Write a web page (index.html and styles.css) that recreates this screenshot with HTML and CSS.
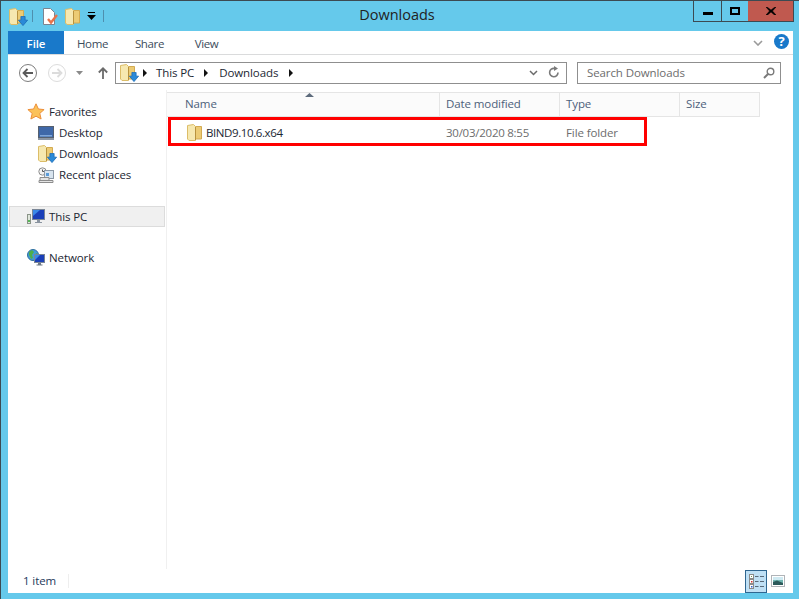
FILE: index.html
```html
<!DOCTYPE html>
<html lang="en">
<head>
    <meta charset="UTF-8">
    <meta name="viewport" content="width=device-width, initial-scale=1.0">
    <title>Downloads</title>
    <link rel="stylesheet" href="styles.css">
</head>
<body>
    <svg class="defs" width="0" height="0">
        <symbol id="folder" viewBox="0 0 15 17">
            <path d="M7 2.500h7.500v12.500H7z" fill="#eccb74" stroke="#d3ab52"/>
            <path d="M.5 1.500 6.500 .5 8.500 2.500v14H2L.5 15z" fill="#f6e8b0" stroke="#dcbd68"/>
            <path d="M8.500 3v13" stroke="#b8923e"/>
        </symbol>
        <symbol id="arrow" viewBox="0 0 12 12">
            <path d="M3.500 .5h5V5H11.500L6 11.500 .5 5h3z" fill="#2a8ad8" stroke="#1a6cb8"/>
        </symbol>
    </svg>

    <div class="titlebar">
        <div class="qat">
            <span class="qat-icon"><svg width="15" height="17"><use href="#folder"/></svg><svg class="badge" width="10" height="10"><use href="#arrow"/></svg></span>
            <span class="qat-sep"></span>
            <svg class="qat-page" width="16" height="17" viewBox="0 0 16 17">
                <path d="M1.500 .5h7l4 4v12h-11z" fill="#fff" stroke="#7c8490"/>
                <path d="M6 11l3 3.500 6-7.500" fill="none" stroke="#e8734a" stroke-width="2.400"/>
            </svg>
            <svg width="15" height="17"><use href="#folder"/></svg>
            <svg width="9" height="8" viewBox="0 0 9 8"><path d="M1 0h7v1H1z M0 3h9L4.500 8z" fill="#000"/></svg>
            <span class="qat-sep"></span>
        </div>
        <div class="title">Downloads</div>
        <div class="controls">
            <div class="ctl ctl-min"><span class="min-glyph"></span></div>
            <div class="ctl ctl-max"><span class="max-glyph"></span></div>
            <div class="ctl ctl-close">
                <svg width="10" height="8" viewBox="0 0 10 8"><path d="M1 0 5 3 9 0h1L6.500 4 10 8H8.500L5 5 1.500 8H0L3.500 4 0 0z" fill="#000" stroke="#000" stroke-width=".5"/></svg>
            </div>
        </div>
    </div>

    <div class="frame">
        <div class="ribbon">
            <div class="tab-file">File</div>
            <div class="tab">Home</div>
            <div class="tab">Share</div>
            <div class="tab">View</div>
            <svg class="chevron" width="10" height="6" viewBox="0 0 10 6"><path d="M1 1l4 4 4-4" fill="none" stroke="#9a9a9a" stroke-width="1.600"/></svg>
            <div class="help">?</div>
        </div>

        <div class="navbar">
            <svg width="20" height="20" viewBox="0 0 20 20">
                <circle cx="10" cy="10" r="8.500" fill="#fff" stroke="#7d7d7d"/>
                <path d="M15 10H6M9.500 6 5.500 10l4 4" fill="none" stroke="#5a5a5a" stroke-width="1.800"/>
            </svg>
            <svg class="nav-fwd" width="20" height="20" viewBox="0 0 20 20">
                <circle cx="10" cy="10" r="8.500" fill="#fff" stroke="#dcdcdc"/>
                <path d="M5 10h8M10.500 6l4 4-4 4" fill="none" stroke="#dcdcdc" stroke-width="1.800"/>
            </svg>
            <svg class="nav-drop" width="7" height="4" viewBox="0 0 7 4"><path d="M0 0h7L3.500 4z" fill="#8a8a8a"/></svg>
            <svg class="nav-up" width="10" height="12" viewBox="0 0 10 12"><path d="M5 12V1.500M.8 5.500 5 1.300l4.200 4.200" fill="none" stroke="#6b6b6b" stroke-width="1.800"/></svg>
            <div class="address">
                <span class="qat-icon"><svg width="15" height="17"><use href="#folder"/></svg><svg class="badge" width="10" height="10"><use href="#arrow"/></svg></span>
                <span class="crumb-arrow crumb-first"></span>
                <span class="crumb">This PC</span>
                <span class="crumb-arrow crumb-mid"></span>
                <span class="crumb">Downloads</span>
                <span class="crumb-arrow crumb-last"></span>
                <svg class="addr-drop" width="9" height="6" viewBox="0 0 9 6"><path d="M1 1l3.500 3.500L8 1" fill="none" stroke="#6b6b6b" stroke-width="1.500"/></svg>
                <svg class="addr-refresh" width="12" height="13" viewBox="0 0 12 13"><path d="M10 6.500A4.200 4.200 0 1 1 6.500 2.400" fill="none" stroke="#7a7a7a" stroke-width="1.600"/><path d="M6 0l4 2.500L6 5z" fill="#7a7a7a"/></svg>
            </div>
            <div class="search">
                <span>Search Downloads</span>
                <svg width="12" height="12" viewBox="0 0 12 12"><circle cx="7.500" cy="4.500" r="3.300" fill="none" stroke="#7a7a7a" stroke-width="1.400"/><path d="M5 7 1 11" stroke="#7a7a7a" stroke-width="2"/></svg>
            </div>
        </div>

        <div class="main">
            <div class="sidebar">
                <div class="nav-item">
                    <svg width="18" height="17" viewBox="0 0 18 17"><path d="M9 .8l2.400 5.200 5.700.6-4.300 3.800 1.300 5.600L9 13.200 3.900 16l1.300-5.600L.9 6.600l5.700-.6z" fill="#fbc25a" stroke="#ec8f3a"/></svg>
                    Favorites
                </div>
                <div class="nav-item nav-child">
                    <svg width="16" height="14" viewBox="0 0 16 14"><rect x=".5" y=".5" width="15" height="11" fill="#3f68a8" stroke="#56606e"/><path d="M2 9h12v1.500H2z" fill="#7fa6d8"/><path d="M0 12h16v2H0z" fill="#8c96a3"/></svg>
                    Desktop
                </div>
                <div class="nav-item nav-child">
                    <span class="qat-icon"><svg width="15" height="17"><use href="#folder"/></svg><svg class="badge" width="10" height="10"><use href="#arrow"/></svg></span>
                    Downloads
                </div>
                <div class="nav-item nav-child">
                    <svg width="16" height="16" viewBox="0 0 16 16"><circle cx="4.500" cy="4.500" r="3.700" fill="#f2f2f2" stroke="#8c8c8c"/><path d="M4.500 2.500v2h2" fill="none" stroke="#555"/><rect x="6.500" y="3.500" width="9" height="8" fill="#d8e4ef" stroke="#8b98a6"/><path d="M8 6h3v3H8z" fill="#5a9bd8"/><path d="M2 10.500h9v3H2zM1 13.500h14v2H1z" fill="#e4e4e4" stroke="#8c8c8c"/></svg>
                    Recent places
                </div>
                <div class="nav-item nav-selected">
                    <svg width="18" height="16" viewBox="0 0 18 16"><rect x=".5" y="5.500" width="3" height="9" fill="#dfe6dc" stroke="#8a9488"/><path d="M1 11h2v2H1z" fill="#58b858"/><rect x="5.500" y=".5" width="12" height="10" fill="#1a3fb8" stroke="#7a8696"/><path d="M6 1h7L6 7z" fill="#3a88e8"/><path d="M10 11h3v2h2v1H8v-1h2z" fill="#8a94a0"/></svg>
                    This PC
                </div>
                <div class="nav-item nav-network">
                    <svg width="18" height="17" viewBox="0 0 18 17"><circle cx="6" cy="6" r="5.500" fill="#3f9bd8" stroke="#2e6f9e"/><path d="M2 3l3-2 2 2-2 3 1 3-2 1-2-4zM7 6l3-2 1 3-2 2z" fill="#4fae4a"/><rect x="7.500" y="5.500" width="10" height="8" fill="#1a3fb8" stroke="#7a8696"/><path d="M8 6h5l-5 5z" fill="#3a88e8"/><path d="M11 14h3v1.500h1.500v1h-6v-1H11z" fill="#6d7884"/></svg>
                    Network
                </div>
            </div>

            <div class="content">
                <div class="col-header">
                    <svg class="sort" width="9" height="4" viewBox="0 0 9 4"><path d="M4.500 0 9 4H0z" fill="#5d6b7c"/></svg>
                    <div class="col col-name">Name</div>
                    <div class="col col-date">Date modified</div>
                    <div class="col col-type">Type</div>
                    <div class="col col-size">Size</div>
                </div>
                <div class="file-row">
                    <div class="file-name">
                        <svg width="15" height="17"><use href="#folder"/></svg>
                        BIND9.10.6.x64
                    </div>
                    <div class="file-date">30/03/2020 8:55</div>
                    <div class="file-type">File folder</div>
                </div>
            </div>
        </div>

        <div class="statusbar">
            <span class="status-text">1 item</span>
            <span class="status-sep"></span>
            <div class="view-btn">
                <svg width="15" height="15" viewBox="0 0 15 15">
                    <rect x=".5" y=".5" width="4" height="4" fill="#fff" stroke="#8a8a8a"/><rect x="2" y="2" width="1" height="1" fill="#6a9a50"/>
                    <rect x=".5" y="5.500" width="4" height="4" fill="#fff" stroke="#8a8a8a"/><rect x="2" y="7" width="1.500" height="1.500" fill="#d03030"/>
                    <rect x=".5" y="10.500" width="4" height="4" fill="#fff" stroke="#8a8a8a"/><rect x="2" y="12" width="1.500" height="1.500" fill="#3060d0"/>
                    <path d="M6 2.500h3.500M11 2.500h4M6 7.500h3.500M11 7.500h4M6 12.500h3.500M11 12.500h4" stroke="#5a6a7a" stroke-width="1.200"/>
                </svg>
            </div>
            <svg class="view-large" width="14" height="12" viewBox="0 0 14 12"><rect x=".5" y=".5" width="13" height="11" fill="#fff" stroke="#b0b4b8"/><path d="M2 2h10v3H2z" fill="#cfeaf2"/><path d="M2 5h10v5H2z" fill="#6fb5b0"/><path d="M2 7l4-1.500 6 2.500v2H2z" fill="#2c5a5a"/></svg>
        </div>
    </div>
</body>
</html>
```

FILE: styles.css
```css
* {
    box-sizing: border-box;
}
html, body {
    margin: 0;
    padding: 0;
}
body {
    width: 799px;
    height: 599px;
    overflow: hidden;
    display: flex;
    flex-direction: column;
    background-color: #65c9eb;
    border-top: 1px solid #3c4a52;
    border-left: 1px solid #3c4a52;
    font-family: "Open Sans", "Noto Sans", sans-serif;
    font-size: 11.5px;
    letter-spacing: -.1px;
    color: #1c2733;
}
.defs {
    display: none;
}

/* title bar */
.titlebar {
    height: 30px;
    display: grid;
    grid-template-columns: 1fr auto 1fr;
    align-items: start;
}
.qat {
    display: flex;
    align-items: center;
    gap: 7px;
    height: 30px;
    padding-left: 8px;
}
.qat-icon {
    position: relative;
    display: inline-block;
    width: 16px;
    height: 17px;
    flex-shrink: 0;
}
.qat-icon svg {
    display: block;
}
.badge {
    position: absolute;
    right: -3px;
    bottom: -1px;
}
.qat-sep {
    width: 1px;
    height: 12px;
    background-color: #4e8fae;
}
.qat-page {
    margin-left: 2px;
}
.title {
    margin-right: 6px;
    font-size: 14.5px;
    letter-spacing: 0;
    line-height: 27px;
    color: #222;
}
.controls {
    display: flex;
    justify-self: end;
    height: 21px;
    margin-right: 5px;
    border: 1px solid #3c4a52;
    border-top: none;
}
.ctl {
    display: flex;
    align-items: center;
    justify-content: center;
}
.ctl-min {
    width: 28px;
    border-right: 1px solid #3c4a52;
}
.ctl-max {
    width: 26px;
}
.ctl-close {
    width: 45px;
    background-color: #c0594f;
}
.min-glyph {
    width: 10px;
    height: 3px;
    margin-top: 5px;
    background-color: #000;
}
.max-glyph {
    width: 10px;
    height: 8px;
    border: 2px solid #000;
}

/* main frame */
.frame {
    flex: 1;
    display: flex;
    flex-direction: column;
    margin: 0 6px 6px 7px;
    background-color: #fff;
}
.ribbon {
    height: 24px;
    display: flex;
    align-items: flex-start;
    border-bottom: 1px solid #dadbdc;
    flex-shrink: 0;
}
.tab-file {
    width: 56px;
    height: 23px;
    line-height: 25px;
    text-align: center;
    background-color: #1979ca;
    color: #fff;
    font-weight: 600;
}
.tab {
    width: 57px;
    line-height: 25px;
    text-align: center;
    letter-spacing: -.35px;
    color: #3c4c5c;
}
.chevron {
    margin: 9px 0 0 auto;
}
.help {
    width: 15px;
    height: 15px;
    margin: 3px 4px 0 11px;
    border-radius: 50%;
    background-color: #1979ca;
    color: #fff;
    font-size: 13px;
    font-weight: 700;
    line-height: 15px;
    text-align: center;
}

/* back/forward and address */
.navbar {
    height: 35px;
    display: flex;
    align-items: center;
    padding: 0 10px;
    flex-shrink: 0;
}
.nav-fwd {
    margin-left: 9px;
}
.nav-drop {
    margin-left: 9px;
}
.nav-up {
    margin-left: 15px;
}
.address {
    width: 452px;
    height: 22px;
    margin-left: 7px;
    display: flex;
    align-items: center;
    padding: 0 6px 0 4px;
    border: 1px solid #8f8f8f;
    color: #1c2733;
}
.crumb-arrow {
    width: 0;
    height: 0;
    margin: 0 9px 0 10px;
    border-left: 4px solid #111;
    border-top: 4px solid transparent;
    border-bottom: 4px solid transparent;
}
.crumb-first {
    margin-left: 7px;
}
.crumb-mid {
    margin-right: 11px;
}
.crumb-last {
    margin-left: 11px;
}
.addr-drop {
    margin-left: auto;
}
.addr-refresh {
    margin-left: 10px;
}
.search {
    width: 204px;
    height: 22px;
    margin-left: 10px;
    display: flex;
    align-items: center;
    justify-content: space-between;
    padding: 0 5px 0 9px;
    border: 1px solid #8f8f8f;
    color: #6d6d6d;
}

/* nav pane and file list */
.main {
    flex: 1;
    display: flex;
    min-height: 0;
}
.sidebar {
    width: 159px;
    padding: 12px 1px 0 1px;
    flex-shrink: 0;
    border-right: 1px solid #f0f0f0;
}
.nav-item {
    height: 21px;
    display: flex;
    align-items: center;
    gap: 4px;
    padding-left: 18px;
    padding-bottom: 2px;
}
.nav-child {
    padding-left: 29px;
    gap: 5px;
}
.nav-selected {
    margin-top: 20px;
    background-color: #f0f0f0;
    border: 1px solid #dcdcdc;
    padding-left: 17px;
    padding-bottom: 0;
}
.nav-network {
    margin-top: 21px;
}
.content {
    flex: 1;
    padding-top: 2px;
}
.col-header {
    position: relative;
    width: 593px;
    height: 25px;
    display: flex;
    background-color: #fbfbfb;
    border-top: 1px solid #e5e5e5;
    border-bottom: 1px solid #e5e5e5;
    border-right: 1px solid #e5e5e5;
    color: #4c607a;
}
.sort {
    position: absolute;
    left: 138px;
    top: 0;
}
.col {
    line-height: 22px;
    padding-left: 6px;
    border-right: 1px solid #e5e5e5;
}
.col-name {
    width: 273px;
    padding-left: 18px;
}
.col-date,
.col-type {
    width: 120px;
}
.col-size {
    border-right: none;
}
.file-row {
    width: 479px;
    height: 29px;
    margin-left: 1px;
    display: flex;
    align-items: center;
    padding-top: 2px;
    border: 3px solid #f00;
    color: #6d6d6d;
}
.file-name {
    width: 268px;
    display: flex;
    align-items: center;
    gap: 4px;
    padding-left: 16px;
    letter-spacing: -.4px;
    color: #1c2733;
}
.file-date {
    width: 120px;
    padding-left: 7px;
    letter-spacing: -.25px;
}
.file-type {
    padding-left: 7px;
}

/* status bar */
.statusbar {
    height: 24px;
    display: flex;
    align-items: center;
    flex-shrink: 0;
    padding-right: 8px;
}
.status-text {
    padding-left: 15px;
    padding-bottom: 2px;
    color: #1e395b;
}
.status-sep {
    width: 1px;
    height: 14px;
    margin-left: 12px;
    background-color: #eeeeee;
}
.view-btn {
    width: 22px;
    height: 23px;
    margin-left: auto;
    display: flex;
    align-items: center;
    justify-content: center;
    background-color: #bfe0f5;
    border: 1px solid #2f6690;
}
.view-large {
    margin-left: 4px;
}
```
